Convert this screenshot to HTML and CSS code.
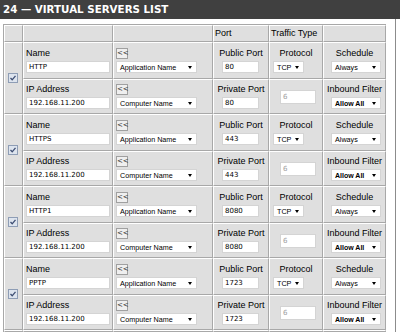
FILE: index.html
```html
<!DOCTYPE html>
<html>
<head>
<meta charset="utf-8">
<link rel="stylesheet" href="styles.css">
</head>
<body>
<h2 class="title">24 — VIRTUAL SERVERS LIST</h2>
<div class="panel">
<table class="list">
  <colgroup><col class="c-chk"><col class="c-name"><col class="c-app"><col class="c-port"><col class="c-traf"><col class="c-sch"></colgroup>
  <tr class="head"><td></td><td></td><td></td><td>Port</td><td>Traffic Type</td><td></td></tr>

  <tr class="r1">
    <td rowspan="2" class="chk"><svg class="cb" width="10" height="10" viewBox="0 0 10 10"><rect x="0.5" y="0.5" width="9" height="9" fill="#dde4ee" stroke="#8e9db5"/><path d="M2.5 5 L4.2 6.8 L7.5 2.8" fill="none" stroke="#3d4d72" stroke-width="1.3"/></svg></td>
    <td><div class="lbl">Name</div><div class="txt name">HTTP</div></td>
    <td><div class="btn">&lt;&lt;</div><div class="sel app"><span>Application Name</span><i class="arr"></i></div></td>
    <td class="ctr"><div class="lbl">Public Port</div><div class="txt port">80</div></td>
    <td><div class="lbl ctr">Protocol</div><div class="sel proto"><span>TCP</span><i class="arr"></i></div></td>
    <td class="ctr"><div class="lbl">Schedule</div><div class="sel sch"><span>Always</span><i class="arr"></i></div></td>
  </tr>
  <tr class="r2">
    <td><div class="lbl">IP Address</div><div class="txt name">192.168.11.200</div></td>
    <td><div class="btn">&lt;&lt;</div><div class="sel app"><span>Computer Name</span><i class="arr"></i></div></td>
    <td class="ctr"><div class="lbl">Private Port</div><div class="txt port">80</div></td>
    <td class="ctr"><div class="txt proto-num">6</div></td>
    <td class="ctr"><div class="lbl">Inbound Filter</div><div class="sel sch"><span class="b">Allow All</span><i class="arr"></i></div></td>
  </tr>

  <tr class="r1">
    <td rowspan="2" class="chk"><svg class="cb" width="10" height="10" viewBox="0 0 10 10"><rect x="0.5" y="0.5" width="9" height="9" fill="#dde4ee" stroke="#8e9db5"/><path d="M2.5 5 L4.2 6.8 L7.5 2.8" fill="none" stroke="#3d4d72" stroke-width="1.3"/></svg></td>
    <td><div class="lbl">Name</div><div class="txt name">HTTPS</div></td>
    <td><div class="btn">&lt;&lt;</div><div class="sel app"><span>Application Name</span><i class="arr"></i></div></td>
    <td class="ctr"><div class="lbl">Public Port</div><div class="txt port">443</div></td>
    <td><div class="lbl ctr">Protocol</div><div class="sel proto"><span>TCP</span><i class="arr"></i></div></td>
    <td class="ctr"><div class="lbl">Schedule</div><div class="sel sch"><span>Always</span><i class="arr"></i></div></td>
  </tr>
  <tr class="r2">
    <td><div class="lbl">IP Address</div><div class="txt name">192.168.11.200</div></td>
    <td><div class="btn">&lt;&lt;</div><div class="sel app"><span>Computer Name</span><i class="arr"></i></div></td>
    <td class="ctr"><div class="lbl">Private Port</div><div class="txt port">443</div></td>
    <td class="ctr"><div class="txt proto-num">6</div></td>
    <td class="ctr"><div class="lbl">Inbound Filter</div><div class="sel sch"><span class="b">Allow All</span><i class="arr"></i></div></td>
  </tr>

  <tr class="r1">
    <td rowspan="2" class="chk"><svg class="cb" width="10" height="10" viewBox="0 0 10 10"><rect x="0.5" y="0.5" width="9" height="9" fill="#dde4ee" stroke="#8e9db5"/><path d="M2.5 5 L4.2 6.8 L7.5 2.8" fill="none" stroke="#3d4d72" stroke-width="1.3"/></svg></td>
    <td><div class="lbl">Name</div><div class="txt name">HTTP1</div></td>
    <td><div class="btn">&lt;&lt;</div><div class="sel app"><span>Application Name</span><i class="arr"></i></div></td>
    <td class="ctr"><div class="lbl">Public Port</div><div class="txt port">8080</div></td>
    <td><div class="lbl ctr">Protocol</div><div class="sel proto"><span>TCP</span><i class="arr"></i></div></td>
    <td class="ctr"><div class="lbl">Schedule</div><div class="sel sch"><span>Always</span><i class="arr"></i></div></td>
  </tr>
  <tr class="r2">
    <td><div class="lbl">IP Address</div><div class="txt name">192.168.11.200</div></td>
    <td><div class="btn">&lt;&lt;</div><div class="sel app"><span>Computer Name</span><i class="arr"></i></div></td>
    <td class="ctr"><div class="lbl">Private Port</div><div class="txt port">8080</div></td>
    <td class="ctr"><div class="txt proto-num">6</div></td>
    <td class="ctr"><div class="lbl">Inbound Filter</div><div class="sel sch"><span class="b">Allow All</span><i class="arr"></i></div></td>
  </tr>

  <tr class="r1">
    <td rowspan="2" class="chk"><svg class="cb" width="10" height="10" viewBox="0 0 10 10"><rect x="0.5" y="0.5" width="9" height="9" fill="#dde4ee" stroke="#8e9db5"/><path d="M2.5 5 L4.2 6.8 L7.5 2.8" fill="none" stroke="#3d4d72" stroke-width="1.3"/></svg></td>
    <td><div class="lbl">Name</div><div class="txt name">PPTP</div></td>
    <td><div class="btn">&lt;&lt;</div><div class="sel app"><span>Application Name</span><i class="arr"></i></div></td>
    <td class="ctr"><div class="lbl">Public Port</div><div class="txt port">1723</div></td>
    <td><div class="lbl ctr">Protocol</div><div class="sel proto"><span>TCP</span><i class="arr"></i></div></td>
    <td class="ctr"><div class="lbl">Schedule</div><div class="sel sch"><span>Always</span><i class="arr"></i></div></td>
  </tr>
  <tr class="r2">
    <td><div class="lbl">IP Address</div><div class="txt name">192.168.11.200</div></td>
    <td><div class="btn">&lt;&lt;</div><div class="sel app"><span>Computer Name</span><i class="arr"></i></div></td>
    <td class="ctr"><div class="lbl">Private Port</div><div class="txt port">1723</div></td>
    <td class="ctr"><div class="txt proto-num">6</div></td>
    <td class="ctr"><div class="lbl">Inbound Filter</div><div class="sel sch"><span class="b">Allow All</span><i class="arr"></i></div></td>
  </tr>

  <tr class="rend"><td></td><td></td><td></td><td></td><td></td><td></td></tr>
</table>
</div>
</body>
</html>
```

FILE: styles.css
```css
* { box-sizing: border-box; }
html, body { margin: 0; padding: 0; }
body {
  width: 400px;
  height: 332px;
  overflow: hidden;
  background: #fff;
  font-family: "Liberation Sans", Arial, sans-serif;
  font-size: 9px;
  color: #000;
}
.title {
  margin: 0;
  height: 19px;
  padding-left: 3px;
  background: #404040;
  color: #fff;
  font: bold 10.3px/19px "DejaVu Sans", Verdana, sans-serif;
}
.panel {
  width: 396px;
  height: 313px;
  overflow: hidden;
  border-right: 1px solid #8c8c8c;
  padding: 5px 0 0 3px;
}
.list {
  border-collapse: separate;
  border-spacing: 0;
  table-layout: fixed;
  width: 383px;
  border-top: 1px solid #a8a8a8;
  border-left: 1px solid #a8a8a8;
}
.c-chk { width: 19px; }
.c-name { width: 90px; }
.c-app { width: 100px; }
.c-port { width: 56px; }
.c-traf { width: 54px; }
.c-sch { width: 63px; }
.list td {
  background: #dfdfdf;
  border-top: 1px solid #fff;
  border-left: 1px solid #fff;
  border-right: 1px solid #a8a8a8;
  border-bottom: 1px solid #a8a8a8;
  padding: 0 2px;
  vertical-align: middle;
  white-space: nowrap;
}
.head td { height: 17px; padding-left: 1px; line-height: 11px; }
.r1 td { height: 37px; }
.r2 td { height: 35px; }
.rend td { height: 2px; padding: 0; line-height: 0; font-size: 0; }
.list td.chk { padding: 0 0 0 3px; }
.cb { display: block; }
.ctr { text-align: center; }
.lbl { line-height: 11px; height: 11px; }
.txt {
  background: #fff;
  border: 1px solid #d4d4d4;
  height: 12px;
  margin-top: 2px;
  font: 7px/10px "DejaVu Sans", Verdana, sans-serif;
  padding-left: 2px;
  text-align: left;
}
.txt.name { width: 84px; }
.txt.port { width: 37px; margin-left: 6px; }
.txt.proto-num { width: 36px; height: 14px; line-height: 12px; margin: 0 0 0 8px; color: #a0a0a0; }
.btn {
  width: 12px;
  height: 11px;
  border: 1px solid #a0a0a0;
  background: #efefef;
  font: 7px/9px "DejaVu Sans", sans-serif;
  text-align: center;
  color: #333;
}
.sel {
  display: flex;
  align-items: center;
  justify-content: space-between;
  background: #fff;
  border: 1px solid #d4d4d4;
  height: 12px;
  margin-top: 2px;
  padding: 0 4px 0 3px;
  font-size: 7.2px;
  text-align: left;
}
.sel.app { width: 81px; }
.sel.proto { width: 31px; margin-left: 1px; }
.sel.sch { width: 50px; margin-left: 5px; }
.sel .b { font-weight: bold; font-size: 7px; }
.arr {
  width: 0;
  height: 0;
  border-left: 2.5px solid transparent;
  border-right: 2.5px solid transparent;
  border-top: 3px solid #000;
}
```
